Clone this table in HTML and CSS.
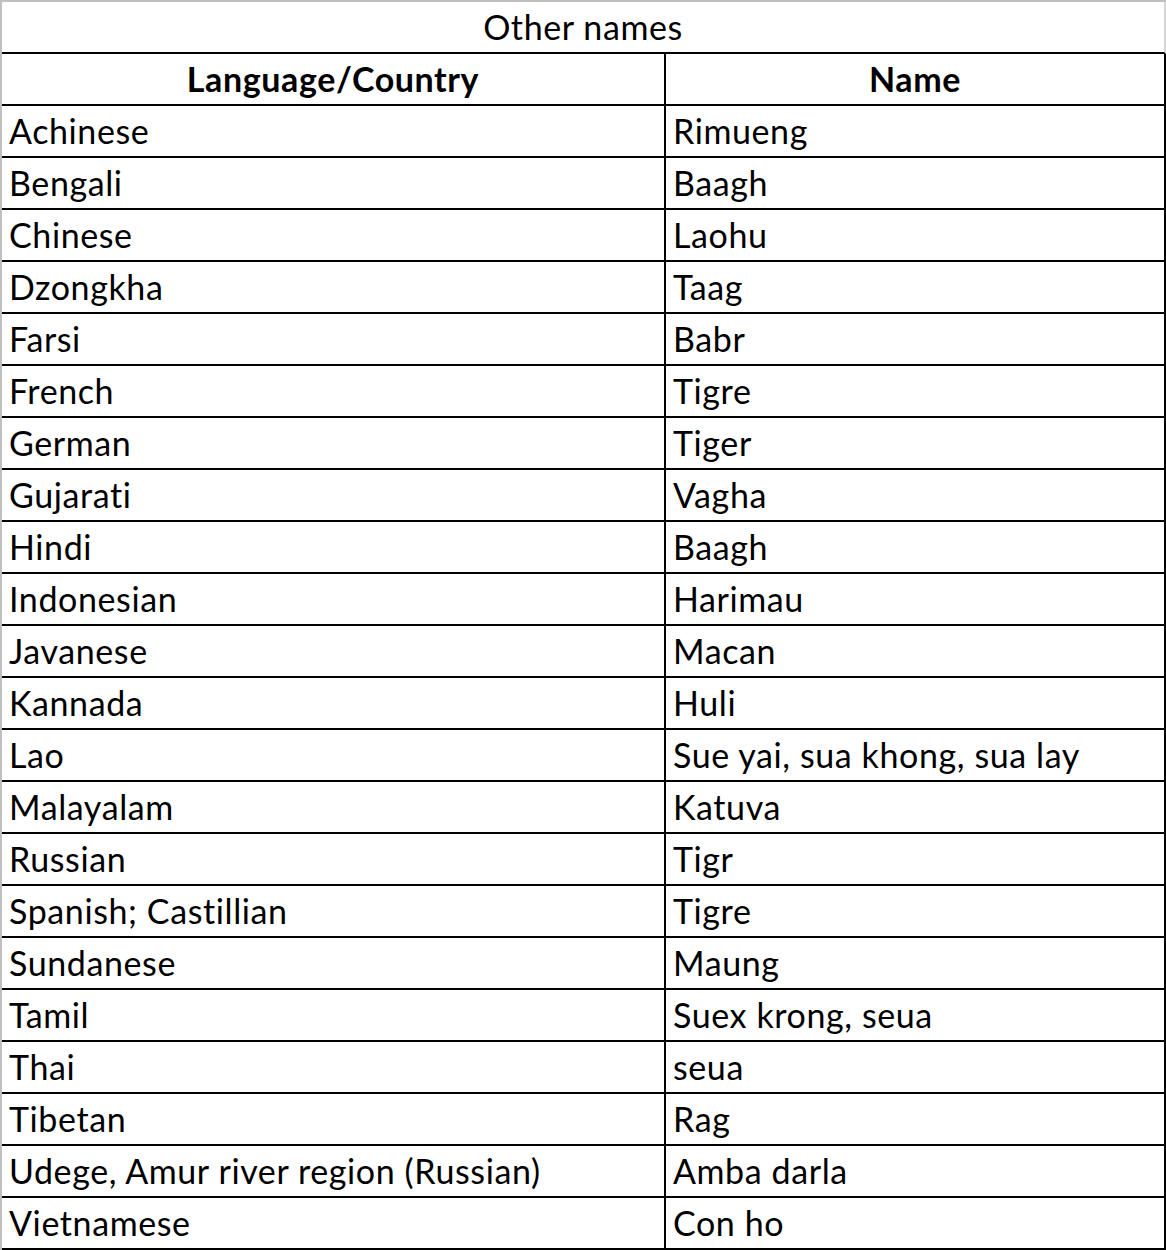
FILE: index.html
```html
<!DOCTYPE html>
<html>
<head>
<meta charset="utf-8">
<link rel="stylesheet" href="styles.css">
</head>
<body>
<div class="sheet">
  <div class="title">Other names</div>
  <div class="row head"><div class="c1">Language/Country</div><div class="c2">Name</div></div>
  <div class="row"><div class="c1">Achinese</div><div class="c2">Rimueng</div></div>
  <div class="row"><div class="c1">Bengali</div><div class="c2">Baagh</div></div>
  <div class="row"><div class="c1">Chinese</div><div class="c2">Laohu</div></div>
  <div class="row"><div class="c1">Dzongkha</div><div class="c2">Taag</div></div>
  <div class="row"><div class="c1">Farsi</div><div class="c2">Babr</div></div>
  <div class="row"><div class="c1">French</div><div class="c2">Tigre</div></div>
  <div class="row"><div class="c1">German</div><div class="c2">Tiger</div></div>
  <div class="row"><div class="c1">Gujarati</div><div class="c2">Vagha</div></div>
  <div class="row"><div class="c1">Hindi</div><div class="c2">Baagh</div></div>
  <div class="row"><div class="c1">Indonesian</div><div class="c2">Harimau</div></div>
  <div class="row"><div class="c1">Javanese</div><div class="c2">Macan</div></div>
  <div class="row"><div class="c1">Kannada</div><div class="c2">Huli</div></div>
  <div class="row"><div class="c1">Lao</div><div class="c2">Sue yai, sua khong, sua lay</div></div>
  <div class="row"><div class="c1">Malayalam</div><div class="c2">Katuva</div></div>
  <div class="row"><div class="c1">Russian</div><div class="c2">Tigr</div></div>
  <div class="row"><div class="c1">Spanish; Castillian</div><div class="c2">Tigre</div></div>
  <div class="row"><div class="c1">Sundanese</div><div class="c2">Maung</div></div>
  <div class="row"><div class="c1">Tamil</div><div class="c2">Suex krong, seua</div></div>
  <div class="row"><div class="c1">Thai</div><div class="c2">seua</div></div>
  <div class="row"><div class="c1">Tibetan</div><div class="c2">Rag</div></div>
  <div class="row"><div class="c1">Udege, Amur river region (Russian)</div><div class="c2">Amba darla</div></div>
  <div class="row"><div class="c1">Vietnamese</div><div class="c2">Con ho</div></div>
</div>
</body>
</html>
```
FILE: styles.css
```css
html, body {
  margin: 0;
  padding: 0;
  background: #fff;
}
.sheet {
  width: 1166px;
  box-sizing: border-box;
  border-top: 2px solid #c0c0c0;
  border-left: 2px solid #c0c0c0;
  font-family: Lato, "Open Sans", sans-serif;
  font-size: 34px;
  letter-spacing: 0.6px;
  font-variant-ligatures: none;
  color: #000;
}
.title {
  height: 50px;
  line-height: 50px;
  border-bottom: 2px solid #000;
  border-right: 2px solid #d4d4d4;
  text-align: center;
}
.row {
  display: flex;
  height: 50px;
  border-bottom: 2px solid #000;
  border-right: 2px solid #000;
}
.c1 {
  width: 664px;
  flex: none;
  border-right: 2px solid #000;
  padding-left: 7px;
  box-sizing: border-box;
  line-height: 50px;
  white-space: nowrap;
}
.c2 {
  flex: 1;
  padding-left: 7px;
  line-height: 50px;
  white-space: nowrap;
}
.head .c1, .head .c2 {
  text-align: center;
  font-weight: bold;
  padding-left: 0;
}
```
